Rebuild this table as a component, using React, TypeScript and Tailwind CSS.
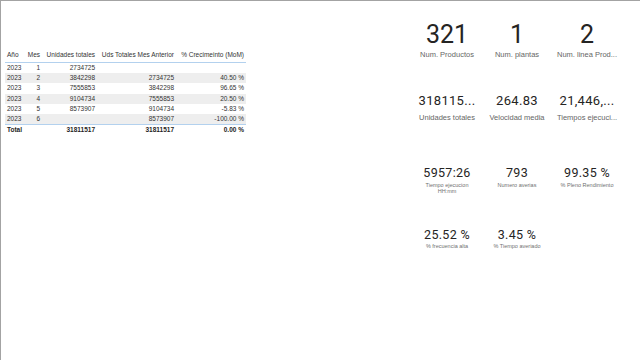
import React from "react";

const rows = [
  { y: "2023", m: "1", u: "2734725", a: "", p: "" },
  { y: "2023", m: "2", u: "3842298", a: "2734725", p: "40.50 %" },
  { y: "2023", m: "3", u: "7555853", a: "3842298", p: "96.65 %" },
  { y: "2023", m: "4", u: "9104734", a: "7555853", p: "20.50 %" },
  { y: "2023", m: "5", u: "8573907", a: "9104734", p: "-5.83 %" },
  { y: "2023", m: "6", u: "", a: "8573907", p: "-100.00 %" },
];

const numFont = { fontFamily: "Roboto, 'DejaVu Sans', sans-serif" };
const lblFont = { fontFamily: "'Liberation Sans', Arial, sans-serif" };

function Row({ cells, bold, shaded }: { cells: string[]; bold?: boolean; shaded?: boolean }) {
  return (
    <div className={`flex h-[10.2px] items-center leading-[10px] ${shaded ? "bg-[#eeeeee]" : ""} ${bold ? "font-bold text-[#252423]" : ""}`}>
      <div className="w-[20px] pl-[2px] whitespace-nowrap">{cells[0]}</div>
      <div className="w-[17px] pr-[2px] text-right whitespace-nowrap">{cells[1]}</div>
      <div className="w-[55px] pr-[2px] text-right whitespace-nowrap">{cells[2]}</div>
      <div className="w-[79px] pr-[2px] text-right whitespace-nowrap">{cells[3]}</div>
      <div className="w-[70px] pr-[2px] text-right whitespace-nowrap">{cells[4]}</div>
    </div>
  );
}

function Card({ value, label, size }: { value: string; label: string[]; size: 1 | 2 | 3 }) {
  const numCls =
    size === 1
      ? "text-[25px] leading-[25px]"
      : size === 2
      ? "text-[13px] leading-[13px] tracking-[0.3px]"
      : "text-[12.5px] leading-[12.5px] tracking-[0.3px]";
  const lblCls =
    size === 3
      ? "text-[5.5px] leading-[6px] text-[#707070] mt-[2px]"
      : size === 2
      ? "text-[7.5px] leading-[10px] text-[#666666] mt-[6px]"
      : "text-[7.5px] leading-[10px] text-[#666666] mt-[3px]";
  return (
    <div className="w-[70px] flex flex-col items-center">
      <div className={`${numCls} text-[#252423] whitespace-nowrap`} style={numFont}>
        {value}
      </div>
      <div className={`${lblCls} text-center whitespace-nowrap`} style={lblFont}>
        {label.map((l, i) => (
          <div key={i}>{l}</div>
        ))}
      </div>
    </div>
  );
}

export default function App() {
  return (
    <div className="w-[640px] h-[360px] bg-white border-t border-l border-[#a3a3a3] flex overflow-hidden">
      <div className="ml-[4px] mt-[49px] w-[241px] text-[6.5px] text-[#333333]" style={lblFont}>
        <div className="flex h-[13px] items-start leading-[10px] border-b border-[#b3d1ee]">
          <div className="w-[20px] pl-[2px] whitespace-nowrap">Año</div>
          <div className="w-[17px] pr-[2px] text-right whitespace-nowrap">Mes</div>
          <div className="w-[55px] pr-[2px] text-right whitespace-nowrap">Unidades totales</div>
          <div className="w-[79px] pr-[2px] text-right whitespace-nowrap">Uds Totales Mes Anterior</div>
          <div className="w-[70px] pr-[2px] text-right whitespace-nowrap">% Crecimeinto (MoM)</div>
        </div>
        {rows.map((r, i) => (
          <Row key={i} cells={[r.y, r.m, r.u, r.a, r.p]} shaded={i % 2 === 1} />
        ))}
        <div className="border-t border-[#b3d1ee]">
          <Row cells={["Total", "", "31811517", "31811517", "0.00 %"]} bold />
        </div>
      </div>
      <div className="ml-[166px] flex flex-col">
        <div className="flex mt-[21px]">
          <Card value="321" label={["Num. Productos"]} size={1} />
          <Card value="1" label={["Num. plantas"]} size={1} />
          <Card value="2" label={["Num. linea Prod..."]} size={1} />
        </div>
        <div className="flex mt-[34px]">
          <Card value="318115..." label={["Unidades totales"]} size={2} />
          <Card value="264.83" label={["Velocidad media"]} size={2} />
          <Card value="21,446,..." label={["Tiempos ejecuci..."]} size={2} />
        </div>
        <div className="flex mt-[44px] items-start">
          <Card value="5957:26" label={["Tiempo ejecucion", "HH:mm"]} size={3} />
          <Card value="793" label={["Numero averias"]} size={3} />
          <Card value="99.35 %" label={["% Pleno Rendimiento"]} size={3} />
        </div>
        <div className="flex mt-[35px] items-start">
          <Card value="25.52 %" label={["% frecuencia alta"]} size={3} />
          <Card value="3.45 %" label={["% Tiempo averiado"]} size={3} />
        </div>
      </div>
    </div>
  );
}
